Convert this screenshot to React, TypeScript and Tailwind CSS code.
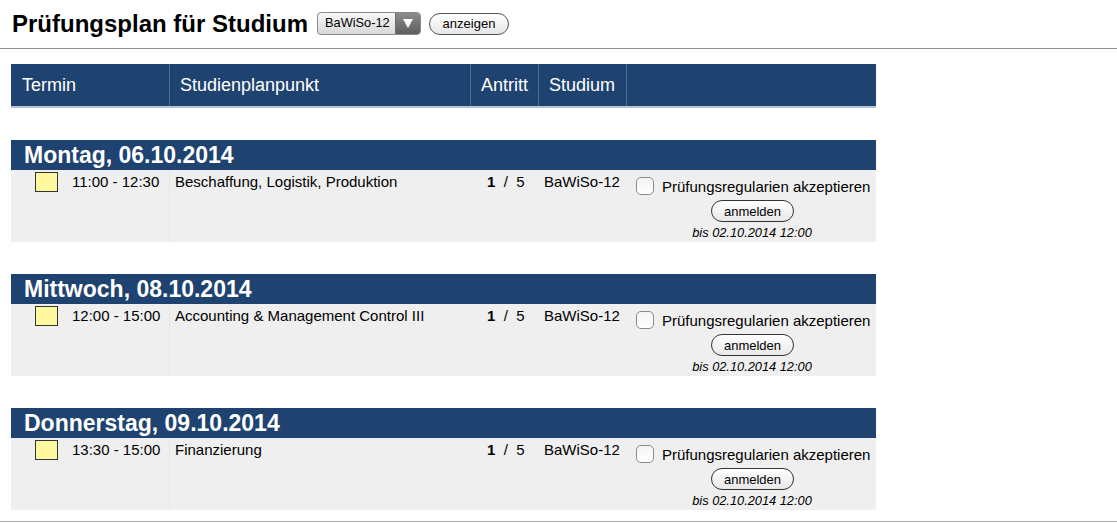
import React from "react";

const groups = [
  { day: "Montag, 06.10.2014", time: "11:00 - 12:30", name: "Beschaffung, Logistik, Produktion" },
  { day: "Mittwoch, 08.10.2014", time: "12:00 - 15:00", name: "Accounting & Management Control III" },
  { day: "Donnerstag, 09.10.2014", time: "13:30 - 15:00", name: "Finanzierung" },
];

const cols = "grid grid-cols-[159px_301px_67px_89px_249px]";

export default function App() {
  return (
    <div className="w-[1117px] h-[523px] bg-white overflow-hidden text-black" style={{ fontFamily: '"Liberation Sans", Arial, sans-serif' }}>
      <div className="flex items-center h-[48px] pl-[12px] pb-[1px]">
        <h1 className="text-[24px] font-bold leading-none">Prüfungsplan für Studium</h1>
        <div className="ml-[9px] flex h-[23px] w-[104px] rounded-[4px] border border-[#8a8a8a] overflow-hidden bg-gradient-to-b from-[#f8f8f8] to-[#d8d8d8]">
          <div className="flex-1 flex items-center pl-[7px] text-[12.8px] leading-none">BaWiSo-12</div>
          <div className="w-[25px] flex items-center justify-center bg-gradient-to-b from-[#8c8c8c] to-[#5e5e5e] border-l border-[#6d6d6d]">
            <svg width="10" height="9" viewBox="0 0 10 9"><path d="M0 0 L10 0 L5 9 Z" fill="#fff" /></svg>
          </div>
        </div>
        <button className="ml-[8px] h-[22px] w-[80px] rounded-full border border-[#555] bg-gradient-to-b from-white to-[#e6e6e6] text-[13px] leading-none flex items-center justify-center">anzeigen</button>
      </div>
      <div className="h-[1px] bg-[#8f8f8f]" />
      <div className="ml-[11px] w-[865px] mt-[15px]">
        <div className={`${cols} h-[44px] bg-[#1f4370] text-white text-[18px] border-b-[2px] border-[#b6c4d8]`}>
          <div className="flex items-center pl-[11px] border-r border-[#4d6b94]">Termin</div>
          <div className="flex items-center pl-[10px] border-r border-[#4d6b94]">Studienplanpunkt</div>
          <div className="flex items-center pl-[10px]">Antritt</div>
          <div className="flex items-center pl-[10px] border-l border-r border-[#4d6b94]">Studium</div>
          <div />
        </div>
        {groups.map((g) => (
          <div key={g.day} className="mt-[32px]">
            <div className="h-[30px] bg-[#1f4370] text-white text-[23px] font-bold leading-none flex items-center pl-[13px] pt-[1px]">{g.day}</div>
            <div className={`${cols} h-[72px] bg-[#efefef] text-[15px] leading-[18px]`}>
              <div className="flex items-start pt-[2px] border-r border-[#e6e6e6]">
                <div className="ml-[24px] w-[23px] h-[20px] shrink-0 bg-[#fdf8a0] border border-[#333]" />
                <div className="ml-[14px] pt-[1px] whitespace-nowrap">{g.time}</div>
              </div>
              <div className="pl-[5px] pt-[3px] whitespace-nowrap">{g.name}</div>
              <div className="pt-[3px] pl-[16px] whitespace-nowrap"><b>1</b>&nbsp;&nbsp;/&nbsp;&nbsp;5</div>
              <div className="pt-[3px] pl-[6px] whitespace-nowrap">BaWiSo-12</div>
              <div className="flex flex-col items-center pt-[6px]">
                <div className="flex items-center h-[20px] self-start ml-[9px]">
                  <div className="w-[18px] h-[18px] rounded-[5px] border border-[#8a8a8a] bg-gradient-to-b from-[#f4f4f4] to-white" />
                  <span className="ml-[8px] text-[15px] mt-[2px] whitespace-nowrap">Prüfungsregularien akzeptieren</span>
                </div>
                <button className="mt-[4px] ml-[2px] h-[22px] w-[83px] rounded-full border border-[#333] bg-gradient-to-b from-white to-[#e8e8e8] text-[13px] leading-none flex items-center justify-center">anmelden</button>
                <div className="mt-[3px] ml-[1px] text-[12.8px] italic leading-[15px] whitespace-nowrap">bis 02.10.2014 12:00</div>
              </div>
            </div>
          </div>
        ))}
      </div>
      <div className="mt-[11px] h-[1px] bg-[#aaa]" />
    </div>
  );
}
